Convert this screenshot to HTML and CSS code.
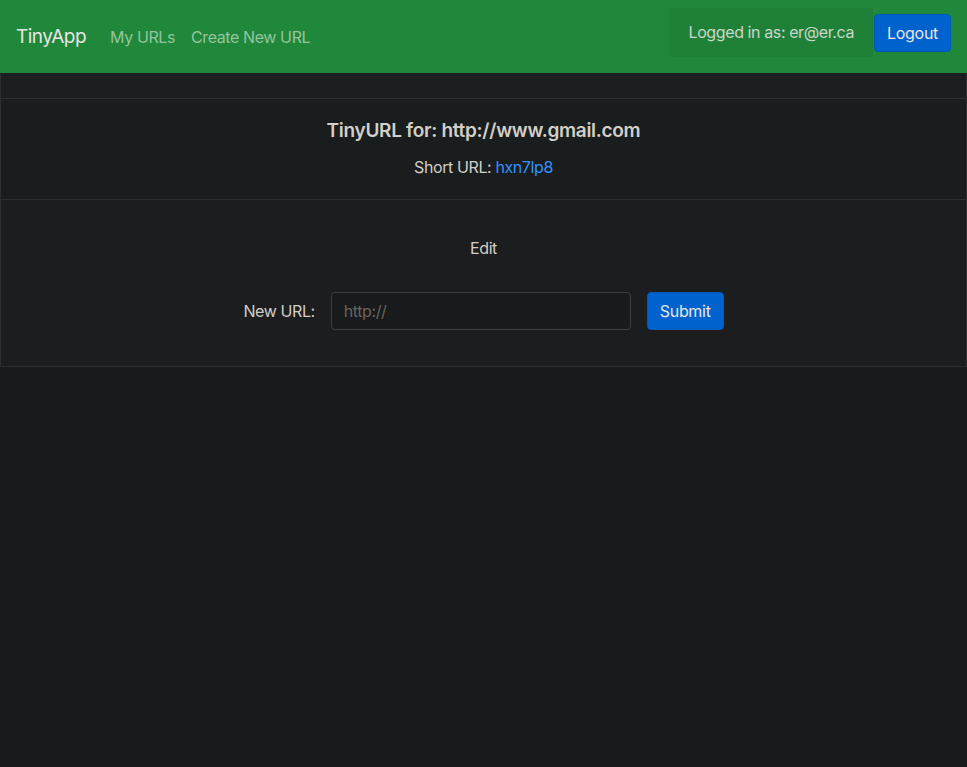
FILE: index.html
```html
<!DOCTYPE html>
<html lang="en">
<head>
<meta charset="utf-8">
<title>TinyApp</title>
<link rel="stylesheet" href="styles.css">
</head>
<body>
<nav class="navbar">
  <a class="brand" href="#">TinyApp</a>
  <div class="nav-links">
    <a class="nav-link" href="#">My URLs</a>
    <a class="nav-link" href="#">Create New URL</a>
  </div>
  <div class="nav-right">
    <span class="user-box">Logged in as: er@er.ca</span>
    <button class="btn">Logout</button>
  </div>
</nav>
<main class="card">
  <div class="card-header"></div>
  <div class="card-body">
    <h5 class="card-title">TinyURL for: http://www.gmail.com</h5>
    <p class="card-text">Short URL: <a class="link" href="#">hxn7lp8</a></p>
  </div>
  <div class="card-footer">
    <h6 class="edit-title">Edit</h6>
    <form class="edit-form">
      <label class="form-label" for="newurl">New URL:</label>
      <input class="form-input" id="newurl" type="text" placeholder="http://">
      <button class="btn" type="button">Submit</button>
    </form>
  </div>
</main>
</body>
</html>
```
FILE: styles.css
```css
* { box-sizing: border-box; }
html, body {
  margin: 0;
  background: #181a1b;
  color: #e8e6e3;
  font-family: Inter, "Noto Sans", sans-serif;
  font-size: 16px;
  line-height: 1.5;
  letter-spacing: -0.4px;
}
a { text-decoration: none; }

.navbar {
  display: flex;
  align-items: center;
  background: #20883a;
  padding: 8px 16px;
  height: 73px;
}
.brand {
  color: #e8e6e3;
  font-size: 19px;
  line-height: 30px;
  margin-right: 24px;
  letter-spacing: -0.5px;
}
.nav-links {
  display: flex;
  gap: 16px;
}
.nav-link {
  color: #95c49f;
  font-size: 16px;
}
.nav-right {
  margin-left: auto;
  align-self: flex-start;
  display: flex;
  align-items: center;
}
.user-box {
  display: block;
  background: #1f8137;
  color: #c9d6c9;
  padding: 12px 19px 13px 20px;
  line-height: 24px;
  margin-right: 1px;
}
.btn {
  font-family: inherit;
  font-size: 16px;
  line-height: 24px;
  letter-spacing: -0.3px;
  color: #e8e6e3;
  background: #0062cc;
  border: 1px solid #0059b8;
  border-radius: 4px;
  padding: 6px 12px;
  height: 38px;
  cursor: pointer;
}

.card {
  border: 1px solid #2c2f31;
  border-top: 1px solid #1d1e20;
  background: #1a1d1e;
}
.card-header {
  height: 25px;
  background: #1d1e20;
  border-bottom: 1px solid #2c2f31;
}
.card-body {
  padding: 20px 20px 20px;
  text-align: center;
  height: 101px;
  border-bottom: 1px solid #2c2f31;
}
.card-title {
  margin: 0 0 12px;
  font-size: 19px;
  font-weight: 600;
  line-height: 24px;
  letter-spacing: -0.3px;
  color: #d2cfc9;
}
.card-text {
  margin: 0;
  color: #d2cfc9;
  line-height: 24px;
}
.link { color: #3391ff; }

.card-footer {
  background: #1c1d1f;
  padding: 36px 20px 36px;
  display: flex;
  flex-direction: column;
  align-items: center;
}
.edit-title {
  margin: 0 0 32px;
  font-size: 16px;
  font-weight: 400;
  line-height: 24px;
  color: #d2cfc9;
}
.edit-form {
  display: flex;
  align-items: center;
  gap: 16px;
}
.form-label { color: #d2cfc9; }
.form-input {
  width: 300px;
  height: 38px;
  background: #181a1b;
  border: 1px solid #3b3f42;
  border-radius: 4px;
  padding: 6px 12px;
  font-family: inherit;
  font-size: 16px;
  letter-spacing: -0.4px;
  color: #d2cfc9;
}
.form-input::placeholder { color: #68645d; }
```
